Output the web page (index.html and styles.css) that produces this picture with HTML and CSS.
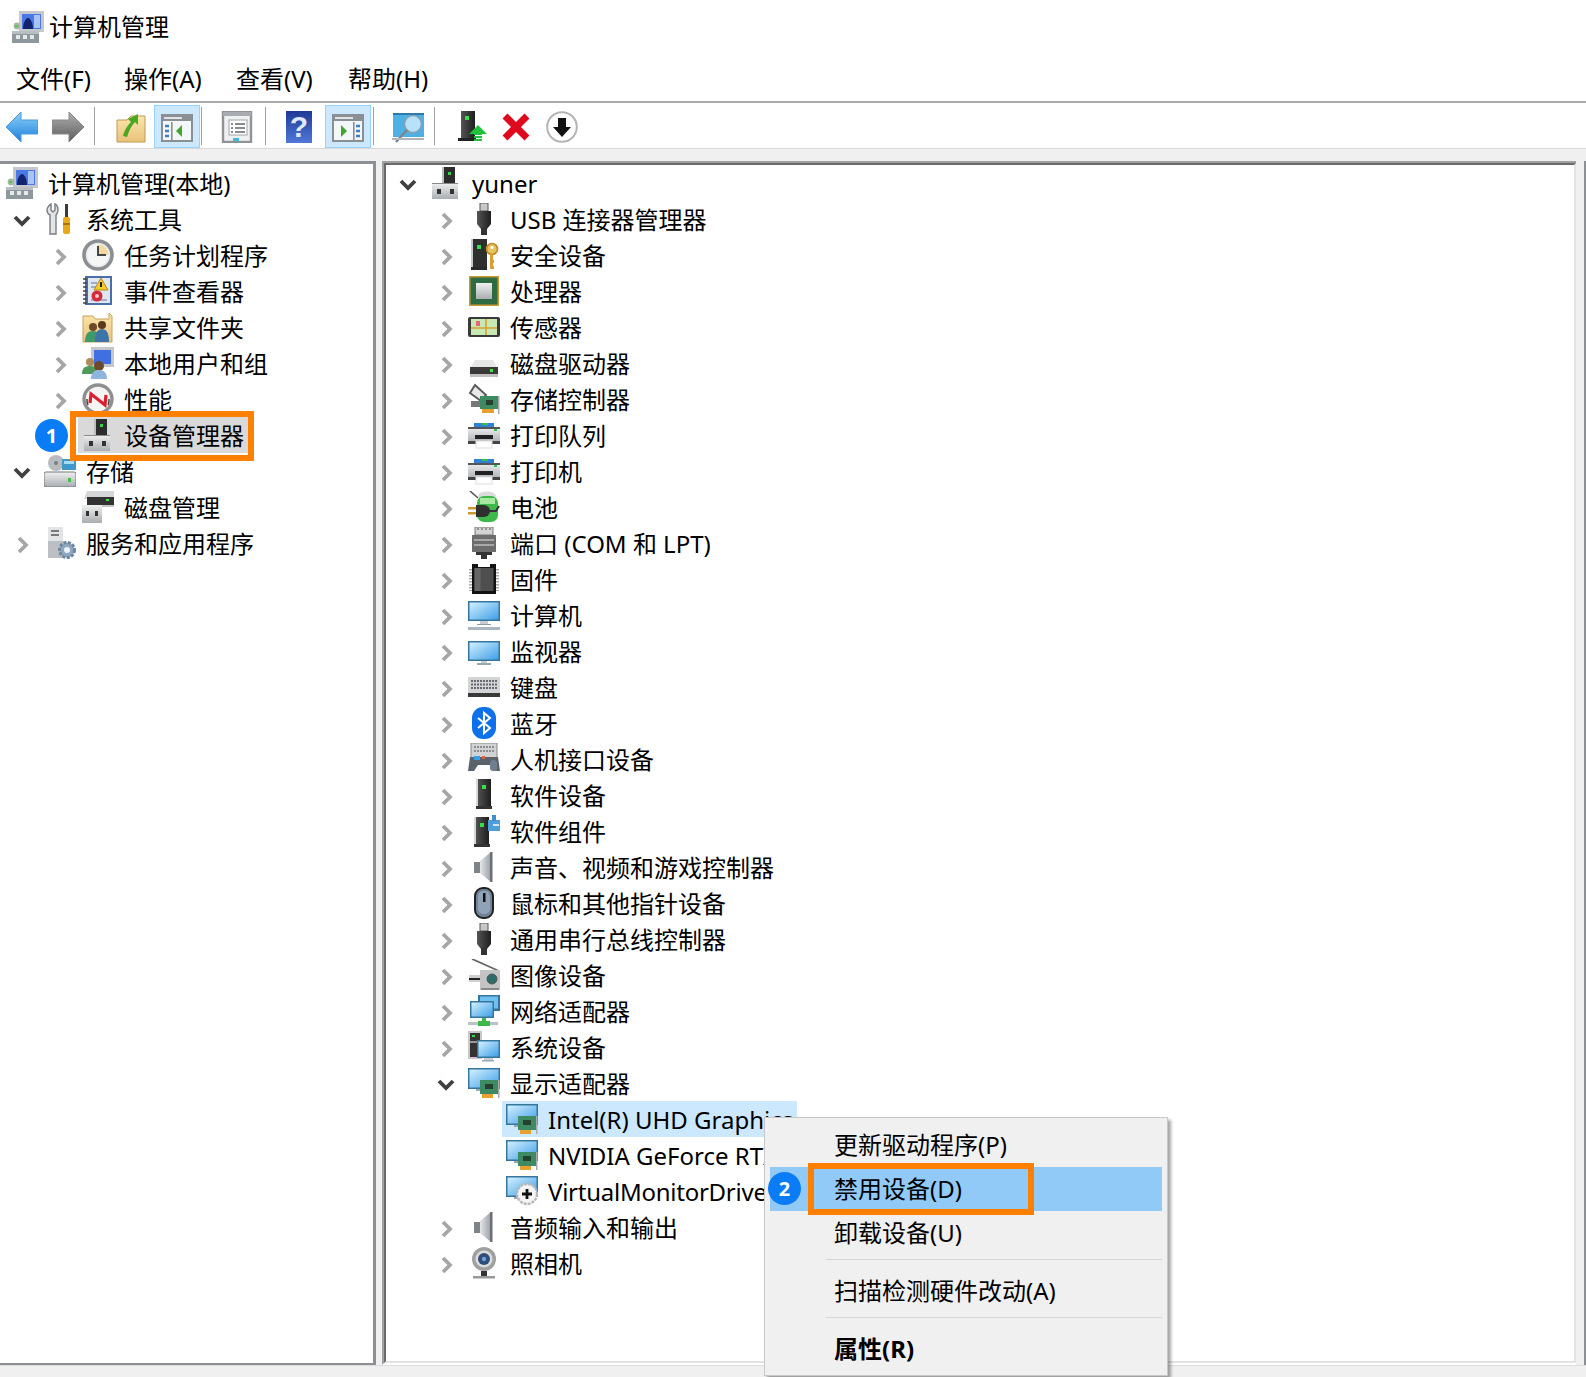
FILE: index.html
```html
<!DOCTYPE html>
<html lang="zh-CN">
<head>
<meta charset="utf-8">
<title>计算机管理</title>
<link rel="stylesheet" href="styles.css">
</head>
<body>
<svg class="defs" width="0" height="0">
  <defs>
    <linearGradient id="gScreen" x1="0" y1="0" x2="1" y2="1"><stop offset="0" stop-color="#d2f0ff"/><stop offset="1" stop-color="#3f9fe6"/></linearGradient>
    <linearGradient id="gGrey" x1="0" y1="0" x2="0" y2="1"><stop offset="0" stop-color="#f0f0f0"/><stop offset="1" stop-color="#a9adb1"/></linearGradient>
    <linearGradient id="gDark" x1="0" y1="0" x2="1" y2="0"><stop offset="0" stop-color="#555"/><stop offset="1" stop-color="#1e1e1e"/></linearGradient>
    <linearGradient id="gCone" x1="0" y1="0" x2="1" y2="0"><stop offset="0" stop-color="#e4e6e8"/><stop offset="1" stop-color="#9aa0a6"/></linearGradient>
    <linearGradient id="gFolder" x1="0" y1="0" x2="0" y2="1"><stop offset="0" stop-color="#fbe6ae"/><stop offset="1" stop-color="#e8c27a"/></linearGradient>
    <linearGradient id="gBlueArrow" x1="0" y1="0" x2="0" y2="1"><stop offset="0" stop-color="#8fd0fb"/><stop offset="1" stop-color="#1b7fd8"/></linearGradient>
    <linearGradient id="gGreyArrow" x1="0" y1="0" x2="0" y2="1"><stop offset="0" stop-color="#b0b0b0"/><stop offset="1" stop-color="#5c5c5c"/></linearGradient>
    <linearGradient id="gHelp" x1="0" y1="0" x2="0" y2="1"><stop offset="0" stop-color="#1e3a94"/><stop offset="1" stop-color="#4f78d8"/></linearGradient>
  </defs>
  <symbol id="i-arrow-r" viewBox="0 0 12 18"><path d="M2 2l7 7-7 7" fill="none" stroke="#a6a6a6" stroke-width="3.8"/></symbol>
  <symbol id="i-arrow-d" viewBox="0 0 18 12"><path d="M2 2l7 7 7-7" fill="none" stroke="#404040" stroke-width="3.8"/></symbol>

  <symbol id="i-mgmt" viewBox="0 0 32 32">
    <rect x="7" y="0" width="25" height="21" fill="#c4c8cd"/><rect x="10" y="3" width="19" height="15" fill="#4a78e6"/><rect x="22" y="4" width="6" height="13" fill="#a9c4f2"/>
    <path d="M11 18c0-7 3-11 5-11s5 4 5 11z" fill="#12226e"/><circle cx="5" cy="15" r="3.4" fill="#a8b8a0"/><rect x="3" y="14" width="3" height="2" fill="#3fd24a"/>
    <rect x="0" y="20" width="27" height="12" fill="#8d979e"/><rect x="0" y="20" width="27" height="3" fill="#b8bec3"/><rect x="4" y="24" width="4" height="4" fill="#e8e8e8"/><rect x="11" y="24" width="4" height="4" fill="#e8e8e8"/><rect x="18" y="24" width="4" height="4" fill="#e8e8e8"/>
  </symbol>
  <symbol id="i-dev" viewBox="0 0 32 32">
    <rect x="14" y="0" width="11" height="16" fill="#2d2d2d"/><rect x="12" y="0" width="2" height="16" fill="#bdbdbd"/><rect x="18" y="5" width="3" height="3" fill="#35d44a"/>
    <rect x="2" y="16" width="26" height="16" fill="url(#gGrey)"/><rect x="2" y="16" width="26" height="1" fill="#8a8a8a"/><rect x="7" y="22" width="4" height="5" fill="#333"/><rect x="20" y="22" width="4" height="5" fill="#333"/>
  </symbol>
  <symbol id="i-tools" viewBox="0 0 32 32">
    <path d="M7 1v6l2 2 2-2V1c2 1 3 3 3 6 0 3-1 4-2 5v19H6V12C4 11 3 9 3 7c0-2 2-5 4-6z" fill="#e2e4e6" stroke="#7a7e82" stroke-width="1.4"/>
    <rect x="21" y="1" width="3" height="13" fill="#3a3a3a"/><rect x="19" y="14" width="7" height="17" rx="2" fill="#e8a818"/><rect x="19" y="20" width="7" height="2" fill="#a87408"/>
  </symbol>
  <symbol id="i-clock" viewBox="0 0 32 32">
    <circle cx="16" cy="16" r="14" fill="#e9ecef" stroke="#8b8f93" stroke-width="3.6"/><circle cx="16" cy="16" r="10.5" fill="#f6f6f6"/><path d="M16 5.5a10.5 10.5 0 0 1 10.5 10.5H16z" fill="#f4d9a4"/>
    <path d="M16 7v9h8" fill="none" stroke="#444" stroke-width="2"/>
  </symbol>
  <symbol id="i-event" viewBox="0 0 32 32">
    <rect x="3" y="1" width="27" height="29" fill="#4b6fa8"/><rect x="6" y="3" width="22" height="25" fill="#dfe7f2"/><path d="M9 8h6M9 12h6M9 25h16" stroke="#8a9ab8" stroke-width="1.4"/><path d="M1 4h4M1 8h4M1 12h4M1 16h4M1 20h4M1 24h4M1 28h4" stroke="#444" stroke-width="1.6"/>
    <path d="M19 3l7 12H12z" fill="#f6cc2c" stroke="#b88a10"/><rect x="18" y="7" width="2" height="5" fill="#222"/><circle cx="15" cy="21" r="5.5" fill="#d42a3a"/><circle cx="15" cy="21" r="2" fill="#f3c9cd"/>
  </symbol>
  <symbol id="i-share" viewBox="0 0 32 32">
    <path d="M1 5h10l2 3h14V2l3 3v26H1z" fill="url(#gFolder)" stroke="#c8a25a"/><circle cx="11" cy="16" r="4" fill="#6e4a2a"/><path d="M3 31c0-8 3-11 8-11s6 3 6 11z" fill="#3f9a6a"/><circle cx="20" cy="14" r="4" fill="#5a3a1e"/><path d="M13 31c0-10 3-13 7-13s7 3 7 13z" fill="#3f74a8"/>
  </symbol>
  <symbol id="i-users" viewBox="0 0 32 32">
    <rect x="9" y="0" width="23" height="20" fill="#c4c8cc"/><rect x="12" y="3" width="17" height="14" fill="#3f6fe0"/><circle cx="8" cy="15" r="4" fill="#b08a5a"/><path d="M0 27c0-6 3-8 8-8s7 3 7 8z" fill="#4f9a5a"/><circle cx="17" cy="19" r="5" fill="#6e4a2a"/><path d="M9 32c0-7 4-9 8-9s8 2 8 9z" fill="#8fb4e0"/>
  </symbol>
  <symbol id="i-perf" viewBox="0 0 32 32">
    <circle cx="16" cy="16" r="14" fill="#f4f4f4" stroke="#8f8f8f" stroke-width="3.4"/><path d="M8 20l1-9 14 11 1-10" fill="none" stroke="#d8202e" stroke-width="3.2"/><path d="M6 22a12 12 0 0 1-1-6M26 22a12 12 0 0 0 1-6" stroke="#444" stroke-width="1.5" fill="none"/>
  </symbol>
  <symbol id="i-storage" viewBox="0 0 32 32">
    <circle cx="12" cy="8" r="8" fill="#b8bcbe"/><circle cx="12" cy="8" r="2" fill="#7c8084"/><rect x="18" y="4" width="14" height="11" fill="#3f98c8"/><rect x="20" y="6" width="10" height="3" fill="#a6dcf4"/>
    <rect x="0" y="17" width="32" height="15" rx="2" fill="url(#gGrey)" stroke="#74787c"/><rect x="24" y="23" width="3" height="4" fill="#3fc24a"/>
  </symbol>
  <symbol id="i-disk" viewBox="0 0 32 32">
    <path d="M5 0h27v8H2z" fill="#d4d6d8"/><rect x="5" y="6" width="27" height="8" fill="#333"/><rect x="24" y="8" width="3" height="2" fill="#3fe04a"/><rect x="20" y="14" width="12" height="2" fill="#c4c4c4"/>
    <rect x="0" y="14" width="20" height="18" fill="url(#gGrey)"/><rect x="4" y="20" width="3" height="5" fill="#333"/><rect x="13" y="20" width="3" height="5" fill="#333"/>
  </symbol>
  <symbol id="i-services" viewBox="0 0 32 32">
    <rect x="4" y="0" width="15" height="31" fill="#bcc0c4"/><rect x="4" y="0" width="15" height="14" fill="#e2e4e6"/><path d="M7 4h8M7 8h8" stroke="#555" stroke-width="1.6"/>
    <circle cx="23" cy="23" r="7.5" fill="#8fa8c0" stroke="#6f86a0" stroke-width="3" stroke-dasharray="3 1.5"/><circle cx="23" cy="23" r="3" fill="#eef3f8"/>
  </symbol>
  <symbol id="i-usb" viewBox="0 0 32 32">
    <rect x="12" y="0" width="8" height="8" fill="#c8c8c8" stroke="#555"/><path d="M9 8h14v13l-4 5h-6l-4-5z" fill="url(#gDark)"/><rect x="13" y="25" width="6" height="7" fill="#333"/>
  </symbol>
  <symbol id="i-sec" viewBox="0 0 32 32">
    <rect x="5" y="0" width="14" height="28" fill="#2f2f2f"/><rect x="3" y="0" width="2" height="28" fill="#c8c8c8"/><rect x="9" y="6" width="4" height="4" fill="#34e04a"/><rect x="3" y="28" width="16" height="3" fill="#2a2a2a"/>
    <circle cx="24" cy="10" r="5.5" fill="#eac262" stroke="#b98a25" stroke-width="1.6"/><circle cx="24" cy="8.5" r="1.5" fill="#fff"/><path d="M22 15v15h4v-3h-1v-3h1v-3h-1v-6z" fill="#d8a030"/>
  </symbol>
  <symbol id="i-cpu" viewBox="0 0 32 32">
    <rect x="1" y="1" width="30" height="30" fill="#c89a30"/><rect x="2.5" y="2.5" width="27" height="27" fill="#2e6a42"/><rect x="8" y="8" width="16" height="16" fill="url(#gGrey)"/>
  </symbol>
  <symbol id="i-sensor" viewBox="0 0 32 32">
    <rect x="0" y="6" width="32" height="20" rx="2" fill="#3a3a3a"/><rect x="3" y="8" width="26" height="16" fill="#c8e8b4"/><rect x="8" y="10" width="4" height="5" fill="#e8647a"/><path d="M3 17h26M18 8v16" stroke="#d8a030" stroke-width="1.6"/>
  </symbol>
  <symbol id="i-drive" viewBox="0 0 32 32">
    <path d="M7 13h18l4 7H3z" fill="#e6e6e6"/><rect x="2" y="20" width="28" height="7" fill="#3a3a3a"/><rect x="2" y="27" width="28" height="3" fill="#c0c0c0"/><rect x="22" y="22" width="3" height="3" fill="#3fe04a"/>
  </symbol>
  <symbol id="i-storctl" viewBox="0 0 32 32">
    <path d="M7 2l11 10-5 6L2 10z" fill="#e8e8e8" stroke="#5a5a5a" stroke-width="2"/><path d="M3 18h14v6H3z" fill="#777"/><rect x="12" y="13" width="18" height="13" fill="#3e8a62"/><rect x="18" y="17" width="7" height="5" fill="#25402f"/><rect x="14" y="26" width="12" height="4" fill="#e8a030"/><rect x="30" y="13" width="1.5" height="18" fill="#aaa"/>
  </symbol>
  <symbol id="i-print" viewBox="0 0 32 32">
    <rect x="6" y="4" width="20" height="4" fill="#2f80d8"/><rect x="14" y="4" width="6" height="2" fill="#35c24a"/><rect x="0" y="8" width="32" height="16" fill="url(#gGrey)"/><rect x="0" y="8" width="32" height="2" fill="#555"/><rect x="0" y="22" width="32" height="3" fill="#444"/><rect x="7" y="16" width="18" height="4" fill="#222"/><rect x="8" y="22" width="16" height="7" fill="#fff" stroke="#ddd"/><rect x="26" y="10" width="3" height="2" fill="#35c24a"/>
  </symbol>
  <symbol id="i-batt" viewBox="0 0 32 32">
    <path d="M2 0l8 7" stroke="#555" stroke-width="1.6"/><ellipse cx="19" cy="5" rx="9" ry="4.5" fill="#dcdcdc"/><rect x="9" y="5" width="21" height="26" rx="7" fill="#3fb84a"/><rect x="12" y="7" width="15" height="6" fill="#a8e8a0"/>
    <rect x="0" y="16" width="8" height="2.5" fill="#c89a30"/><rect x="0" y="21" width="8" height="2.5" fill="#c89a30"/><path d="M8 14h8a6 6 0 0 1 0 12H8z" fill="#2f2f2f"/><path d="M21 20h7l3-5" stroke="#333" stroke-width="2" fill="none"/>
  </symbol>
  <symbol id="i-port" viewBox="0 0 32 32">
    <rect x="7" y="0" width="18" height="8" fill="#d4d4d4" stroke="#777"/><path d="M9 2h2M13 2h2M17 2h2M21 2h2" stroke="#555"/><rect x="4" y="8" width="24" height="17" fill="#6d6d6d"/><path d="M6 13h20M6 18h20" stroke="#a8a8a8" stroke-width="2"/><rect x="8" y="25" width="16" height="3" fill="#333"/><rect x="13" y="28" width="6" height="4" fill="#333"/>
  </symbol>
  <symbol id="i-firm" viewBox="0 0 32 32">
    <path d="M4 1h6v3h12V1h6v30H4z" fill="#111"/><rect x="6.5" y="5" width="19" height="23" fill="#4e4e4e"/><rect x="6.5" y="5" width="6" height="23" fill="#666"/><path d="M2.5 6v22M29.5 6v22" stroke="#aaa" stroke-width="3" stroke-dasharray="1.5 1.5"/>
  </symbol>
  <symbol id="i-comp" viewBox="0 0 32 32">
    <rect x="0" y="2" width="32" height="20" fill="#36769e"/><rect x="1.5" y="3.5" width="29" height="17" fill="url(#gScreen)"/><rect x="12" y="22" width="8" height="3" fill="#c8ced4"/><rect x="9" y="25" width="14" height="1" fill="#8a9aa8"/><rect x="0" y="28" width="32" height="3" fill="#aab6c0"/>
  </symbol>
  <symbol id="i-mon" viewBox="0 0 32 32">
    <rect x="0" y="6" width="32" height="20" fill="#36769e"/><rect x="1.5" y="7.5" width="29" height="17" fill="url(#gScreen)"/><rect x="13" y="26" width="6" height="2" fill="#c8ced4"/><rect x="9" y="28" width="14" height="2" fill="#9aa8b4"/>
  </symbol>
  <symbol id="i-kbd" viewBox="0 0 32 32">
    <rect x="0" y="6" width="32" height="16" fill="#d2d4d6"/><path d="M3 10h26M3 13.5h26M3 17h26" stroke="#66696d" stroke-width="2" stroke-dasharray="2 1"/><rect x="0" y="22" width="32" height="4" fill="#3a3a3a"/>
  </symbol>
  <symbol id="i-bt" viewBox="0 0 32 32">
    <rect x="4" y="0" width="24" height="32" rx="11" fill="#0f70ec"/><path d="M10 11l12 10-6 5V6l6 5-12 10" fill="none" stroke="#fff" stroke-width="2"/>
  </symbol>
  <symbol id="i-hid" viewBox="0 0 32 32">
    <rect x="3" y="0" width="26" height="15" fill="#d0d2d4" stroke="#8a8a8a"/><path d="M6 4h20M6 8h20" stroke="#777" stroke-width="1.5" stroke-dasharray="2 1"/><path d="M0 28l2-14h28l2 14h-6l-4-6h-12l-4 6z" fill="#5a626a"/><rect x="6" y="13" width="6" height="4" fill="#38a0e8"/><rect x="14" y="13" width="3" height="3" fill="#e85a3a"/><rect x="22" y="17" width="7" height="11" rx="3" fill="#6f7f90"/>
  </symbol>
  <symbol id="i-soft" viewBox="0 0 32 32">
    <rect x="9" y="0" width="14" height="27" fill="url(#gDark)"/><rect x="14" y="6" width="4" height="4" fill="#34e04a"/><rect x="8" y="27" width="16" height="3" fill="#333"/><rect x="8" y="0" width="2" height="27" fill="#d8d8d8"/>
  </symbol>
  <symbol id="i-softc" viewBox="0 0 32 32">
    <rect x="7" y="2" width="14" height="27" fill="url(#gDark)"/><rect x="6" y="2" width="2" height="27" fill="#d8d8d8"/><rect x="12" y="8" width="4" height="4" fill="#34e04a"/><rect x="6" y="29" width="16" height="3" fill="#333"/><rect x="20" y="5" width="12" height="11" fill="#4f9ed8"/><rect x="24" y="0" width="4" height="6" fill="#3f8ed0"/><rect x="25" y="9" width="6" height="2" fill="#cfe6f6"/>
  </symbol>
  <symbol id="i-sound" viewBox="0 0 32 32">
    <rect x="6" y="11" width="7" height="11" fill="#7f8488"/><path d="M12 10l11-9v30l-11-9z" fill="url(#gCone)"/><rect x="22" y="1" width="2.5" height="30" fill="#6c7074"/>
  </symbol>
  <symbol id="i-mouse" viewBox="0 0 32 32">
    <rect x="7" y="1" width="18" height="30" rx="8" fill="#6f8298" stroke="#222" stroke-width="2"/><rect x="10" y="4" width="12" height="23" rx="5" fill="#8fa2b6"/><rect x="15" y="6" width="2.5" height="9" fill="#111"/>
  </symbol>
  <symbol id="i-imaging" viewBox="0 0 32 32">
    <path d="M4 0l27 12" stroke="#666" stroke-width="1.8"/><rect x="12" y="11" width="20" height="20" fill="#c4c4c4"/><rect x="13" y="29" width="18" height="2" fill="#888"/><circle cx="24" cy="20" r="5" fill="#2e6b6b" stroke="#555"/><rect x="1" y="16" width="11" height="7" fill="#cfcfcf"/><rect x="1" y="19" width="11" height="2" fill="#222"/>
  </symbol>
  <symbol id="i-net" viewBox="0 0 32 32">
    <rect x="10" y="0" width="22" height="16" fill="#36769e"/><rect x="12" y="1.5" width="18" height="12" fill="#6fc0ee"/><rect x="2" y="6" width="24" height="17" fill="#36769e"/><rect x="3.5" y="7.5" width="21" height="14" fill="url(#gScreen)"/><rect x="0" y="27" width="30" height="3" fill="#b8c4cc"/><rect x="10" y="26" width="12" height="5" fill="#3fb84a"/><rect x="14" y="23" width="4" height="3" fill="#3fb84a"/>
  </symbol>
  <symbol id="i-sys" viewBox="0 0 32 32">
    <rect x="0" y="0" width="14" height="28" fill="#c8c8c8"/><rect x="2" y="2" width="10" height="24" fill="#333"/><rect x="4" y="4" width="3" height="2" fill="#35d44a"/><rect x="2" y="10" width="10" height="2" fill="#999"/>
    <rect x="9" y="9" width="23" height="18" fill="#36769e"/><rect x="10.5" y="10.5" width="20" height="15" fill="url(#gScreen)"/><rect x="16" y="27" width="9" height="2" fill="#c8ced4"/><rect x="14" y="29" width="12" height="1.5" fill="#9aa8b4"/>
  </symbol>
  <symbol id="i-disp" viewBox="0 0 32 32">
    <rect x="0" y="1" width="32" height="21" fill="#36769e"/><rect x="1.5" y="2.5" width="29" height="18" fill="url(#gScreen)"/><rect x="8" y="22" width="10" height="2" fill="#9aa8b4"/>
    <rect x="12" y="13" width="18" height="14" fill="#3e8a62"/><rect x="17" y="17" width="8" height="5" fill="#25402f"/><rect x="14" y="27" width="11" height="4" fill="#e8a030"/><rect x="30" y="13" width="1.5" height="18" fill="#aaa"/>
  </symbol>
  <symbol id="i-virt" viewBox="0 0 32 32">
    <rect x="0" y="1" width="32" height="21" fill="#36769e"/><rect x="1.5" y="2.5" width="29" height="18" fill="url(#gScreen)"/><rect x="8" y="22" width="10" height="2" fill="#9aa8b4"/>
    <circle cx="21" cy="19" r="10" fill="#f4f4f4" stroke="#b8b8b8" stroke-width="2.4" stroke-dasharray="3 1"/><path d="M21 14v10M16 19h10" stroke="#111" stroke-width="2.8"/>
  </symbol>
  <symbol id="i-webcam" viewBox="0 0 32 32">
    <circle cx="16" cy="12" r="12" fill="#a0a0a0"/><circle cx="16" cy="12" r="8.5" fill="#dcdcdc"/><circle cx="16" cy="12" r="6" fill="#2e4e78"/><circle cx="16" cy="12" r="2.2" fill="#6fa0d8"/><rect x="13" y="24" width="6" height="5" fill="#333"/><rect x="5" y="29" width="22" height="2.5" fill="#999"/>
  </symbol>

  <symbol id="t-back" viewBox="0 0 32 32"><path d="M15 1L0 16l15 15v-8h17V9H15z" fill="url(#gBlueArrow)" stroke="#4a9ade"/></symbol>
  <symbol id="t-forward" viewBox="0 0 32 32"><path d="M17 1l15 15-15 15v-8H0V9h17z" fill="url(#gGreyArrow)" stroke="#888"/></symbol>
  <symbol id="t-folder" viewBox="0 0 32 32"><path d="M2 9h10l4-4h14v26H2z" fill="url(#gFolder)" stroke="#c09a50"/><path d="M8 25c2-7 5-11 8-14l-3-3 10-5v11l-3-3c-3 3-6 8-8 15z" fill="#4aa820"/></symbol>
  <symbol id="t-panel-l" viewBox="0 0 32 32"><rect x="1" y="4" width="30" height="26" fill="#f4f7f9" stroke="#8a8f94" stroke-width="2"/><rect x="1" y="4" width="30" height="6" fill="#8a8f94"/><rect x="3" y="6" width="18" height="2" fill="#dfe3e6"/><rect x="10" y="11" width="1.6" height="18" fill="#8a8f94"/><path d="M4 15h4M4 20h4M4 25h4" stroke="#3a7ec8" stroke-width="2.4"/><path d="M21 14v12l-6-6z" fill="#40a828"/></symbol>
  <symbol id="t-panel-r" viewBox="0 0 32 32"><rect x="1" y="4" width="30" height="26" fill="#f4f7f9" stroke="#8a8f94" stroke-width="2"/><rect x="1" y="4" width="30" height="6" fill="#8a8f94"/><rect x="3" y="6" width="18" height="2" fill="#dfe3e6"/><rect x="21" y="11" width="1.6" height="18" fill="#8a8f94"/><path d="M24 15h4M24 20h4M24 25h4" stroke="#3a7ec8" stroke-width="2.4"/><path d="M9 14v12l6-6z" fill="#40a828"/></symbol>
  <symbol id="t-doc" viewBox="0 0 32 32"><rect x="2" y="1" width="28" height="30" fill="#eef0f2" stroke="#8f9397" stroke-width="2.4"/><rect x="2" y="1" width="28" height="4" fill="#a8acb0"/><rect x="8" y="9" width="18" height="15" fill="#fff" stroke="#a0a4a8"/><path d="M10 13h2M14 13h10M10 17h2M14 17h10M10 21h2M14 21h10" stroke="#666" stroke-width="1.4"/><rect x="12" y="27" width="6" height="3" fill="#40b8e0"/></symbol>
  <symbol id="t-monitor" viewBox="0 0 32 32"><rect x="1" y="2" width="31" height="24" fill="#4fb0e6"/><rect x="1" y="2" width="31" height="2" fill="#2d7ca8"/><circle cx="21" cy="13" r="8.5" fill="#b8e2fa" stroke="#8aa0b0" stroke-width="1.6"/><path d="M15 19L4 31" stroke="#7f8488" stroke-width="2.4"/><rect x="0" y="27" width="32" height="2" fill="#b0b6bb"/></symbol>
  <symbol id="t-devup" viewBox="0 0 32 32"><rect x="5" y="0" width="14" height="27" fill="url(#gDark)"/><rect x="9" y="5" width="4" height="4" fill="#34e04a"/><rect x="2" y="27" width="18" height="3" fill="#222"/><path d="M22 14l9 9h-5v1h-8v-1h-5z" fill="#1fc23a"/><path d="M18 26h8M18 29h8" stroke="#1fc23a" stroke-width="2"/></symbol>
  <symbol id="t-x" viewBox="0 0 32 32"><path d="M5 5l22 22M27 5L5 27" stroke="#e00a1e" stroke-width="7"/></symbol>
  <symbol id="t-down" viewBox="0 0 32 32"><circle cx="16" cy="16" r="14.8" fill="#fff" stroke="#b4b4b4" stroke-width="2"/><path d="M12 7h8v9h5l-9 10-9-10h5z" fill="#111"/></symbol>
</svg>

<div class="app">
  <header class="titlebar">
    <svg class="ic"><use href="#i-mgmt"/></svg>
    <span>计算机管理</span>
  </header>
  <nav class="menubar">
    <span>文件(F)</span><span>操作(A)</span><span>查看(V)</span><span>帮助(H)</span>
  </nav>
  <div class="toolbar">
    <div class="tb"><svg class="ic"><use href="#t-back"/></svg></div>
    <div class="tb"><svg class="ic"><use href="#t-forward"/></svg></div>
    <i class="sep sep-a"></i>
    <div class="tb"><svg class="ic"><use href="#t-folder"/></svg></div>
    <div class="tb on"><svg class="ic"><use href="#t-panel-l"/></svg></div>
    <i class="sep sep-b"></i>
    <div class="tb"><svg class="ic"><use href="#t-doc"/></svg></div>
    <i class="sep sep-c"></i>
    <div class="tb"><svg class="ic help" viewBox="0 0 32 32"><rect x="3" y="0" width="26" height="32" fill="url(#gHelp)"/><text x="16" y="26" text-anchor="middle" class="help-q">?</text></svg></div>
    <div class="tb on gap"><svg class="ic"><use href="#t-panel-r"/></svg></div>
    <i class="sep sep-d"></i>
    <div class="tb"><svg class="ic"><use href="#t-monitor"/></svg></div>
    <i class="sep sep-e"></i>
    <div class="tb"><svg class="ic"><use href="#t-devup"/></svg></div>
    <div class="tb pull"><svg class="ic"><use href="#t-x"/></svg></div>
    <div class="tb"><svg class="ic"><use href="#t-down"/></svg></div>
  </div>

  <main class="workspace">
    <section class="pane-left">
      <div class="row l0"><span class="item"><svg class="ic"><use href="#i-mgmt"/></svg><span>计算机管理(本地)</span></span></div>
      <div class="row l1"><span class="arrow"><svg class="ad"><use href="#i-arrow-d"/></svg></span><span class="item"><svg class="ic"><use href="#i-tools"/></svg><span>系统工具</span></span></div>
      <div class="row l2"><span class="arrow"><svg class="ar"><use href="#i-arrow-r"/></svg></span><span class="item"><svg class="ic"><use href="#i-clock"/></svg><span>任务计划程序</span></span></div>
      <div class="row l2"><span class="arrow"><svg class="ar"><use href="#i-arrow-r"/></svg></span><span class="item"><svg class="ic"><use href="#i-event"/></svg><span>事件查看器</span></span></div>
      <div class="row l2"><span class="arrow"><svg class="ar"><use href="#i-arrow-r"/></svg></span><span class="item"><svg class="ic"><use href="#i-share"/></svg><span>共享文件夹</span></span></div>
      <div class="row l2"><span class="arrow"><svg class="ar"><use href="#i-arrow-r"/></svg></span><span class="item"><svg class="ic"><use href="#i-users"/></svg><span>本地用户和组</span></span></div>
      <div class="row l2"><span class="arrow"><svg class="ar"><use href="#i-arrow-r"/></svg></span><span class="item"><svg class="ic"><use href="#i-perf"/></svg><span>性能</span></span></div>
      <div class="row l2"><span class="arrow"></span><span class="item grey"><svg class="ic"><use href="#i-dev"/></svg><span>设备管理器</span></span>
        <b class="badge badge-1">1</b><i class="frame frame-1"></i></div>
      <div class="row l1"><span class="arrow"><svg class="ad"><use href="#i-arrow-d"/></svg></span><span class="item"><svg class="ic"><use href="#i-storage"/></svg><span>存储</span></span></div>
      <div class="row l2"><span class="arrow"></span><span class="item"><svg class="ic"><use href="#i-disk"/></svg><span>磁盘管理</span></span></div>
      <div class="row l1"><span class="arrow"><svg class="ar"><use href="#i-arrow-r"/></svg></span><span class="item"><svg class="ic"><use href="#i-services"/></svg><span>服务和应用程序</span></span></div>
    </section>

    <section class="pane-right">
      <div class="pane-right-in">
        <div class="row l1"><span class="arrow"><svg class="ad"><use href="#i-arrow-d"/></svg></span><span class="item"><svg class="ic"><use href="#i-dev"/></svg><span>yuner</span></span></div>
        <div class="row l2"><span class="arrow"><svg class="ar"><use href="#i-arrow-r"/></svg></span><span class="item"><svg class="ic"><use href="#i-usb"/></svg><span>USB 连接器管理器</span></span></div>
        <div class="row l2"><span class="arrow"><svg class="ar"><use href="#i-arrow-r"/></svg></span><span class="item"><svg class="ic"><use href="#i-sec"/></svg><span>安全设备</span></span></div>
        <div class="row l2"><span class="arrow"><svg class="ar"><use href="#i-arrow-r"/></svg></span><span class="item"><svg class="ic"><use href="#i-cpu"/></svg><span>处理器</span></span></div>
        <div class="row l2"><span class="arrow"><svg class="ar"><use href="#i-arrow-r"/></svg></span><span class="item"><svg class="ic"><use href="#i-sensor"/></svg><span>传感器</span></span></div>
        <div class="row l2"><span class="arrow"><svg class="ar"><use href="#i-arrow-r"/></svg></span><span class="item"><svg class="ic"><use href="#i-drive"/></svg><span>磁盘驱动器</span></span></div>
        <div class="row l2"><span class="arrow"><svg class="ar"><use href="#i-arrow-r"/></svg></span><span class="item"><svg class="ic"><use href="#i-storctl"/></svg><span>存储控制器</span></span></div>
        <div class="row l2"><span class="arrow"><svg class="ar"><use href="#i-arrow-r"/></svg></span><span class="item"><svg class="ic"><use href="#i-print"/></svg><span>打印队列</span></span></div>
        <div class="row l2"><span class="arrow"><svg class="ar"><use href="#i-arrow-r"/></svg></span><span class="item"><svg class="ic"><use href="#i-print"/></svg><span>打印机</span></span></div>
        <div class="row l2"><span class="arrow"><svg class="ar"><use href="#i-arrow-r"/></svg></span><span class="item"><svg class="ic"><use href="#i-batt"/></svg><span>电池</span></span></div>
        <div class="row l2"><span class="arrow"><svg class="ar"><use href="#i-arrow-r"/></svg></span><span class="item"><svg class="ic"><use href="#i-port"/></svg><span>端口 (COM 和 LPT)</span></span></div>
        <div class="row l2"><span class="arrow"><svg class="ar"><use href="#i-arrow-r"/></svg></span><span class="item"><svg class="ic"><use href="#i-firm"/></svg><span>固件</span></span></div>
        <div class="row l2"><span class="arrow"><svg class="ar"><use href="#i-arrow-r"/></svg></span><span class="item"><svg class="ic"><use href="#i-comp"/></svg><span>计算机</span></span></div>
        <div class="row l2"><span class="arrow"><svg class="ar"><use href="#i-arrow-r"/></svg></span><span class="item"><svg class="ic"><use href="#i-mon"/></svg><span>监视器</span></span></div>
        <div class="row l2"><span class="arrow"><svg class="ar"><use href="#i-arrow-r"/></svg></span><span class="item"><svg class="ic"><use href="#i-kbd"/></svg><span>键盘</span></span></div>
        <div class="row l2"><span class="arrow"><svg class="ar"><use href="#i-arrow-r"/></svg></span><span class="item"><svg class="ic"><use href="#i-bt"/></svg><span>蓝牙</span></span></div>
        <div class="row l2"><span class="arrow"><svg class="ar"><use href="#i-arrow-r"/></svg></span><span class="item"><svg class="ic"><use href="#i-hid"/></svg><span>人机接口设备</span></span></div>
        <div class="row l2"><span class="arrow"><svg class="ar"><use href="#i-arrow-r"/></svg></span><span class="item"><svg class="ic"><use href="#i-soft"/></svg><span>软件设备</span></span></div>
        <div class="row l2"><span class="arrow"><svg class="ar"><use href="#i-arrow-r"/></svg></span><span class="item"><svg class="ic"><use href="#i-softc"/></svg><span>软件组件</span></span></div>
        <div class="row l2"><span class="arrow"><svg class="ar"><use href="#i-arrow-r"/></svg></span><span class="item"><svg class="ic"><use href="#i-sound"/></svg><span>声音、视频和游戏控制器</span></span></div>
        <div class="row l2"><span class="arrow"><svg class="ar"><use href="#i-arrow-r"/></svg></span><span class="item"><svg class="ic"><use href="#i-mouse"/></svg><span>鼠标和其他指针设备</span></span></div>
        <div class="row l2"><span class="arrow"><svg class="ar"><use href="#i-arrow-r"/></svg></span><span class="item"><svg class="ic"><use href="#i-usb"/></svg><span>通用串行总线控制器</span></span></div>
        <div class="row l2"><span class="arrow"><svg class="ar"><use href="#i-arrow-r"/></svg></span><span class="item"><svg class="ic"><use href="#i-imaging"/></svg><span>图像设备</span></span></div>
        <div class="row l2"><span class="arrow"><svg class="ar"><use href="#i-arrow-r"/></svg></span><span class="item"><svg class="ic"><use href="#i-net"/></svg><span>网络适配器</span></span></div>
        <div class="row l2"><span class="arrow"><svg class="ar"><use href="#i-arrow-r"/></svg></span><span class="item"><svg class="ic"><use href="#i-sys"/></svg><span>系统设备</span></span></div>
        <div class="row l2"><span class="arrow"><svg class="ad"><use href="#i-arrow-d"/></svg></span><span class="item"><svg class="ic"><use href="#i-disp"/></svg><span>显示适配器</span></span></div>
        <div class="row l3"><span class="arrow"></span><span class="item blue"><svg class="ic"><use href="#i-disp"/></svg><span>Intel(R) UHD Graphics</span></span></div>
        <div class="row l3"><span class="arrow"></span><span class="item"><svg class="ic"><use href="#i-disp"/></svg><span>NVIDIA GeForce RTX 3060</span></span></div>
        <div class="row l3"><span class="arrow"></span><span class="item"><svg class="ic"><use href="#i-virt"/></svg><span class="narrow">VirtualMonitorDriver</span></span></div>
        <div class="row l2"><span class="arrow"><svg class="ar"><use href="#i-arrow-r"/></svg></span><span class="item"><svg class="ic"><use href="#i-sound"/></svg><span>音频输入和输出</span></span></div>
        <div class="row l2"><span class="arrow"><svg class="ar"><use href="#i-arrow-r"/></svg></span><span class="item"><svg class="ic"><use href="#i-webcam"/></svg><span>照相机</span></span></div>
      </div>
    </section>
    <section class="pane-actions"></section>
  </main>
  <footer class="statusbar"></footer>
</div>

<div class="ctx">
  <div class="ctx-row">更新驱动程序(P)</div>
  <div class="ctx-row ctx-active">禁用设备(D)<b class="badge badge-2">2</b><i class="frame frame-2"></i></div>
  <div class="ctx-row">卸载设备(U)</div>
  <div class="ctx-sep"></div>
  <div class="ctx-row">扫描检测硬件改动(A)</div>
  <div class="ctx-sep"></div>
  <div class="ctx-row ctx-bold">属性(R)</div>
</div>
</body>
</html>
```

FILE: styles.css
```css
* { box-sizing: border-box; }
html, body { margin: 0; padding: 0; }
body {
  width: 1586px;
  height: 1377px;
  overflow: hidden;
  position: relative;
  background: #fff;
  color: #000;
  font-family: "Noto Sans", "Noto Sans CJK SC", sans-serif;
  font-size: 24px;
  line-height: 36px;
}
.defs { position: absolute; }
.app { display: flex; flex-direction: column; height: 1377px; }
.ic { width: 32px; height: 32px; display: block; flex: none; }

.titlebar { height: 54px; display: flex; align-items: center; gap: 5px; padding-left: 12px; }
.menubar { height: 47px; display: flex; padding: 7px 0 0 16px; }
.menubar span { flex: 0 0 112px; }
.menubar span:first-child { flex-basis: 108px; }

.toolbar {
  height: 48px;
  display: flex;
  align-items: flex-end;
  border-top: 2px solid #aaa;
  border-bottom: 1px solid #d9d9d9;
  background: #fff;
}
.tb { width: 46px; height: 43px; display: flex; align-items: center; justify-content: center; border: 1px solid transparent; }
.tb.on { background: #cce8ff; border-color: #99d1ff; }
.tb.gap { margin-left: 3px; }
.tb.pull { margin-left: -2px; }
.toolbar .tb:first-child { margin-left: -1px; }
.sep { width: 1px; height: 38px; background: #a0a0a0; align-self: center; }
.sep-a { margin: 0 13px 0 3px; }
.sep-b { margin: 0 12px 0 1px; }
.sep-c { margin: 0 10px 0 5px; }
.sep-d { margin: 0 11px 0 2px; }
.sep-e { margin: 0 14px 0 3px; }
.help-q { font-family: "Liberation Sans", sans-serif; font-weight: 700; font-size: 30px; fill: #dfe8fb; }

.workspace { flex: 1; min-height: 0; display: flex; background: #f0f0f0; padding-top: 12px; }
.pane-left {
  width: 376px;
  background: #fff;
  border-top: 3px solid #8c8f94;
  border-right: 3px solid #8c8f94;
  border-bottom: 2px solid #8c8f94;
  padding-top: 1px;
}
.pane-right {
  width: 1194px;
  margin-left: 6px;
  border-top: 2px solid #a0a0a0;
  border-left: 2px solid #a0a0a0;
  border-bottom: 2px solid #fff;
}
.pane-right-in {
  height: 100%;
  background: #fff;
  border-top: 2px solid #696969;
  border-left: 2px solid #696969;
  border-right: 2px solid #e3e3e3;
  border-bottom: 2px solid #e3e3e3;
}
.pane-actions { flex: 1; margin-left: 8px; border-left: 2px solid #8c8f94; background: #fff; }
.statusbar { height: 12px; background: #f0f0f0; border-top: 1px solid #ddd; }

.row { height: 36px; display: flex; align-items: center; position: relative; white-space: nowrap; }
.l0 { padding-left: 3px; }
.l1 { padding-left: 3px; }
.l2 { padding-left: 41px; }
.l3 { padding-left: 79px; }
.arrow { width: 38px; height: 36px; flex: none; display: flex; align-items: center; justify-content: center; padding: 3px 0 0 1px; }
.ar { width: 12px; height: 18px; display: block; }
.ad { width: 18px; height: 12px; display: block; margin-left: -2px; }
.item { display: flex; align-items: center; gap: 10px; height: 36px; padding: 0 4px; margin-left: -1px; }
.item > span { padding-top: 1px; }
.narrow { letter-spacing: -0.25px; }
.grey { background: #d9d9d9; }
.blue { background: #cce8ff; }

.badge {
  position: absolute;
  width: 33px;
  height: 33px;
  border-radius: 50%;
  background: #0a7cf5;
  color: #fff;
  font-size: 20px;
  line-height: 33px;
  font-weight: 700;
  text-align: center;
  font-family: "Noto Sans", sans-serif;
  z-index: 3;
}
.badge-1 { left: 35px; top: 2px; }
.badge-2 { left: -2px; top: 5px; }
.frame { position: absolute; border: 6px solid #ff7f00; z-index: 2; }
.frame-1 { left: 70px; top: -6px; width: 184px; height: 50px; }
.frame-2 { left: 38px; top: -4px; width: 226px; height: 52px; }

.ctx {
  position: absolute;
  left: 764px;
  top: 1117px;
  width: 404px;
  height: 259px;
  background: #f0f0f0;
  border: 1px solid #c8c8c8;
  box-shadow: 3px 3px 3px rgba(0, 0, 0, 0.35);
  padding: 5px 5px;
  z-index: 5;
}
.ctx-row { height: 44px; line-height: 44px; padding-left: 64px; position: relative; }
.ctx-active { background: #91c9f7; }
.ctx-bold { font-weight: 700; }
.ctx-sep { height: 1px; background: #d4d4d4; margin: 4px 0 9px 56px; }
```
